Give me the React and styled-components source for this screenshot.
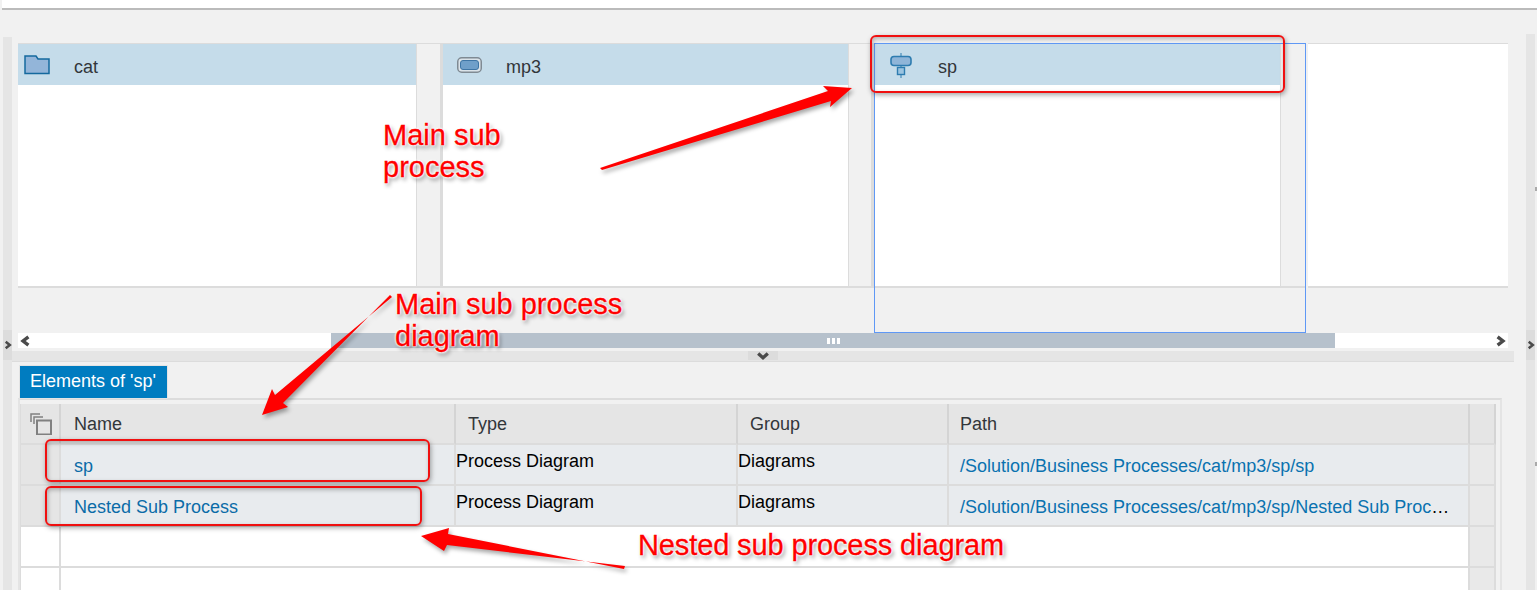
import { Fragment } from "react"
import styled, { createGlobalStyle } from "styled-components"

const GlobalStyle = createGlobalStyle`
    html, body {
        margin: 0;
        padding: 0;
        background: #f1f1f1;
        overflow: hidden;
    }
    * {
        box-sizing: border-box;
    }
`

const Page = styled.div`
    position: relative;
    width: 1537px;
    height: 590px;
    overflow: hidden;
    background: #f1f1f1;
    font-family: "Liberation Sans", Arial, sans-serif;
    font-size: 18px;
    color: #32363a;
`

const TopBar = styled.div`
    height: 10px;
    margin-left: 2px;
    background: #fff;
    border-bottom: 2px solid #bbb;
`

const Body = styled.div`
    display: flex;
    height: 580px;
`

const Rail = styled.div`
    flex: none;
    width: 9px;
    margin-left: ${(p) => p.$left}px;
    padding-top: ${(p) => p.$handleAt}px;
    margin-top: ${(p) => p.$top}px;
    background: #e5e5e5;
`

const RailHandle = styled.div`
    display: flex;
    align-items: center;
    justify-content: center;
    height: 30px;
    background: #dcdcdc;
`

const Center = styled.div`
    flex: none;
    width: ${(p) => p.$width}px;
    padding-top: 33px;
`

const Ticks = styled.div`
    flex: none;
    width: 2px;
    padding-top: 177px;
`

const Tick = styled.div`
    width: 2px;
    height: 4px;
    margin-bottom: 271px;
    background: #aaa;
`

const Explorer = styled.div`
    display: flex;
    width: 1490px;
    height: 290px;
    margin-left: 6px;
`

const Column = styled.div`
    flex: none;
    width: ${(p) => p.$width}px;
    height: 290px;
    margin-right: ${(p) => (p.$focused ? 2 : 0)}px;
    ${(p) => p.$focused && "outline: 1px solid #5f98f5; outline-offset: -1px; padding: 0 1px;"}
`

const Band = styled.div`
    display: flex;
    height: 245px;
    border-top: 1px solid #dcdcdc;
    border-bottom: 2px solid #dcdcdc;
`

const List = styled.div`
    flex: none;
    width: ${(p) => p.$width}px;
    background: #fff;
`

const Gutter = styled.div`
    flex: 1;
    background: #f1f1f1;
    border-left: 1px solid #dcdcdc;
    border-right: ${(p) => (p.$last ? 0 : 3)}px solid #dcdcdc;
`

const Filler = styled.div`
    flex: 1;
    height: 245px;
    background: #fff;
    border-top: 1px solid #dcdcdc;
    border-bottom: 2px solid #dcdcdc;
`

const ListRow = styled.div`
    display: flex;
    align-items: center;
    height: 41px;
    padding-left: ${(p) => p.$pad}px;
    background: #c5dcea;
`

const IconSlot = styled.span`
    display: flex;
    flex: none;
    width: ${(p) => p.$width}px;
    padding-top: ${(p) => p.$drop || 0}px;
`

const RowLabel = styled.span`
    padding-top: 5px;
`

const Scrollbar = styled.div`
    display: flex;
    width: 1490px;
    height: 15px;
    margin-left: 6px;
    background: #fff;
`

const ScrollEnd = styled.div`
    display: flex;
    flex: ${(p) => (p.$right ? "1" : "none")};
    width: 313px;
    align-items: center;
    justify-content: ${(p) => (p.$right ? "flex-end" : "flex-start")};
    padding: 0 2px;
`

const Thumb = styled.div`
    display: flex;
    flex: none;
    width: 1004px;
    gap: 2px;
    align-items: center;
    justify-content: center;
    background: #b6c1cc;
`

const Grip = styled.span`
    width: 3px;
    height: 6px;
    background: #fff;
`

const Splitter = styled.div`
    display: flex;
    justify-content: center;
    width: 1502px;
    height: 11px;
    margin-top: 3px;
    background: #e5e5e5;
    border-bottom: 1px solid #dcdcdc;
`

const SplitHandle = styled.div`
    display: flex;
    align-items: center;
    justify-content: center;
    width: 30px;
    height: 9px;
    background: #dcdcdc;
`

const TabStrip = styled.div`
    display: flex;
    height: 33px;
    margin: 3px 0 0 6px;
`

const Tab = styled.div`
    display: flex;
    align-items: center;
    height: 32px;
    margin: 1px 0 0 2px;
    padding: 0 11px 2px 10px;
    background: #007cc0;
    color: #fff;
    box-shadow: 0 0 0 1px #e4e4e4;
`

const Panel = styled.div`
    width: 1484px;
    height: 200px;
    margin-left: 6px;
    padding: 4px 5px 0 0;
    border-top: 2px solid #dcdcdc;
    border-left: 2px solid #e4e4e4;
    border-right: 2px solid #e4e4e4;
`

const Grid = styled.div`
    display: grid;
    grid-template-columns: 40px 395px 282px 211px 521px 26px;
    grid-auto-rows: 41px;
    width: 1475px;
    border-left: 1px solid #dcdcdc;
`

const Cell = styled.div`
    min-width: 0;
    overflow: hidden;
    line-height: 20px;
    white-space: nowrap;
    text-overflow: ellipsis;
    color: #000;
    border-right: 2px solid #dcdcdc;
    border-bottom: 2px solid #dcdcdc;
    background: ${(p) => p.$bg};
    padding: ${(p) => p.$pad};
    grid-column: ${(p) => (p.$span ? `span ${p.$span}` : "auto")};
`

const HeadCell = styled(Cell)`
    display: flex;
    align-items: center;
    color: #32363a;
    background: #e5e5e5;
    border-right-color: #d4d4d4;
    padding: 0 0 0 ${(p) => p.$indent}px;
`

const Link = styled.span`
    color: ${(p) => p.$color || "#0b6ca8"};
`

const Overlay = styled.svg`
    position: absolute;
    left: 0;
    top: 0;
    pointer-events: none;
    filter: drop-shadow(2px 3px 2px rgba(0, 0, 0, 0.35));
`

const Callout = styled.div`
    position: absolute;
    left: ${(p) => p.$x}px;
    top: ${(p) => p.$y}px;
    width: ${(p) => p.$w}px;
    height: ${(p) => p.$h}px;
    border: 2px solid #f01010;
    border-radius: 6px;
    box-shadow: 1px 2px 5px rgba(0, 0, 0, 0.35), inset 1px 2px 4px rgba(0, 0, 0, 0.25);
`

const Note = styled.div`
    position: absolute;
    left: ${(p) => p.$x}px;
    top: ${(p) => p.$y}px;
    font-size: 29px;
    line-height: 32px;
    letter-spacing: ${(p) => p.$spacing || 0}px;
    white-space: pre;
    color: #ff0000;
    -webkit-text-stroke: 0.3px #ff0000;
    text-shadow: 0 0 2px #fff, 0 0 2px #fff, 0 0 3px #fff, 0 0 3px #fff, 2px 3px 4px rgba(0, 0, 0, 0.45);
`

function Chevron({ dir = "right", size = 10, color = "#4a4a4a" }) {
    const paths = {
        right: "M3 1.5 L7.5 5 L3 8.5",
        left: "M7 1.5 L2.5 5 L7 8.5",
        down: "M1 3 L5 6.5 L9 3",
    }
    return (
        <svg width={size} height={size} viewBox="0 0 10 10" fill="none">
            <path d={paths[dir]} stroke={color} strokeWidth="2.8" />
        </svg>
    )
}

function FolderIcon() {
    return (
        <svg width="26" height="20" viewBox="0 0 26 20">
            <path d="M1 1 H12 L14 4 H25 V18.5 H1 Z" fill="#93b5d9" stroke="#14699e" strokeWidth="1.5" />
        </svg>
    )
}

function ProcessIcon() {
    return (
        <svg width="25" height="16" viewBox="0 0 25 16">
            <rect x="0.75" y="0.75" width="23.5" height="14.5" rx="4" fill="#dbe3e9" stroke="#7f8a93" strokeWidth="1.5" />
            <rect x="3.5" y="3.5" width="18" height="9" rx="2.5" fill="#6f9fc9" stroke="#3e75a5" />
        </svg>
    )
}

function SubProcessIcon() {
    return (
        <svg width="22" height="25" viewBox="0 0 22 25">
            <path d="M11 0 V25" stroke="#2e7cb0" strokeWidth="1" />
            <rect x="1" y="3.5" width="20" height="9" rx="3" fill="#8fb5d8" stroke="#2e7cb0" strokeWidth="1.6" />
            <rect x="7.5" y="14.5" width="7" height="7" fill="#9cc4e0" stroke="#2e7cb0" strokeWidth="1.4" />
        </svg>
    )
}

function CopyIcon() {
    return (
        <svg width="22" height="22" viewBox="0 0 22 22" fill="none" stroke="#808080" strokeWidth="1.5">
            <path d="M1 9 V1 H10" />
            <path d="M4 11 V4 H13" />
            <rect x="7" y="7.5" width="14" height="14" strokeWidth="2" />
        </svg>
    )
}

const columns = [
    { name: "cat", width: 425, list: 398, pad: 6, slot: 50, icon: <FolderIcon /> },
    { name: "mp3", width: 431, list: 405, pad: 14, slot: 49, icon: <ProcessIcon /> },
]

const rows = [
    { name: "sp", path: "/Solution/Business Processes/cat/mp3/sp/sp" },
    { name: "Nested Sub Process", path: "/Solution/Business Processes/cat/mp3/sp/Nested Sub Process" },
]

const arrows = [
    "600,168 828,91 823,86 852,88 830,107 831,101 602,170",
    "390,295 283,403 288,407 262,415 272,389 275,395 392,297",
    "625,566 447,545 444,551 421,536 449,528 448,534 624,569",
]

function App() {
    return (
        <Page>
            <GlobalStyle />
            <TopBar />
            <Body>
                <Rail $left={3} $top={27} $handleAt={293}>
                    <RailHandle>
                        <Chevron />
                    </RailHandle>
                </Rail>
                <Center $width={1514}>
                    <Explorer>
                        {columns.map((c) => (
                            <Column key={c.name} $width={c.width}>
                                <Band>
                                    <List $width={c.list}>
                                        <ListRow $pad={c.pad}>
                                            <IconSlot $width={c.slot}>{c.icon}</IconSlot>
                                            <RowLabel>{c.name}</RowLabel>
                                        </ListRow>
                                    </List>
                                    <Gutter />
                                </Band>
                            </Column>
                        ))}
                        <Column $width={432} $focused>
                            <Band>
                                <List $width={405}>
                                    <ListRow $pad={15}>
                                        <IconSlot $width={48} $drop={2}>
                                            <SubProcessIcon />
                                        </IconSlot>
                                        <RowLabel>sp</RowLabel>
                                    </ListRow>
                                </List>
                                <Gutter $last />
                            </Band>
                        </Column>
                        <Filler />
                    </Explorer>
                    <Scrollbar>
                        <ScrollEnd>
                            <Chevron dir="left" size={12} />
                        </ScrollEnd>
                        <Thumb>
                            <Grip />
                            <Grip />
                            <Grip />
                        </Thumb>
                        <ScrollEnd $right>
                            <Chevron size={12} />
                        </ScrollEnd>
                    </Scrollbar>
                    <Splitter>
                        <SplitHandle>
                            <Chevron dir="down" size={12} />
                        </SplitHandle>
                    </Splitter>
                    <TabStrip>
                        <Tab>Elements of 'sp'</Tab>
                    </TabStrip>
                    <Panel>
                        <Grid>
                            <HeadCell $indent={9}>
                                <CopyIcon />
                            </HeadCell>
                            <HeadCell $indent={13}>Name</HeadCell>
                            <HeadCell $indent={12}>Type</HeadCell>
                            <HeadCell $indent={12}>Group</HeadCell>
                            <HeadCell $indent={11}>Path</HeadCell>
                            <HeadCell $indent={0} />
                            {rows.map((r) => (
                                <Fragment key={r.name}>
                                    <Cell $bg="#e5e5e5" />
                                    <Cell $bg="#e8ebee" $pad="11px 0 0 13px">
                                        <Link>{r.name}</Link>
                                    </Cell>
                                    <Cell $bg="#e8ebee" $pad="6px 0 0 0">Process Diagram</Cell>
                                    <Cell $bg="#e8ebee" $pad="6px 0 0 0">Diagrams</Cell>
                                    <Cell $bg="#e8ebee" $pad="11px 15px 0 11px">
                                        <Link $color="#0a72b0">{r.path}</Link>
                                    </Cell>
                                    <Cell $bg="#e9e9e9" />
                                </Fragment>
                            ))}
                            {[0, 1].map((i) => (
                                <Fragment key={i}>
                                    <Cell $bg="#fff" />
                                    <Cell $bg="#fff" $span={4} />
                                    <Cell $bg="#e9e9e9" />
                                </Fragment>
                            ))}
                        </Grid>
                    </Panel>
                </Center>
                <Rail $left={0} $top={24} $handleAt={296}>
                    <RailHandle>
                        <Chevron />
                    </RailHandle>
                </Rail>
                <Ticks>
                    <Tick />
                    <Tick />
                </Ticks>
            </Body>

            <Callout $x={870} $y={35} $w={415} $h={58} />
            <Callout $x={45} $y={439} $w={385} $h={43} />
            <Callout $x={45} $y={486} $w={377} $h={40} />
            <Overlay width="1537" height="590" viewBox="0 0 1537 590">
                {arrows.map((points) => (
                    <polygon key={points} points={points} fill="#ff0000" />
                ))}
            </Overlay>
            <Note $x={383} $y={119}>{"Main sub\nprocess"}</Note>
            <Note $x={395} $y={288}>{"Main sub process\ndiagram"}</Note>
            <Note $x={638} $y={529} $spacing={-0.12}>Nested sub process diagram</Note>
        </Page>
    )
}

export default App
